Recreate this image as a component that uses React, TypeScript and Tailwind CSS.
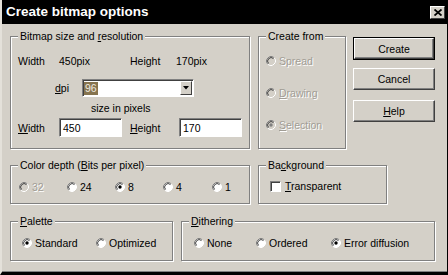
import React from "react";

const BG = "bg-[#d4d0c8]";

function Radio({ checked = false, disabled = false }: { checked?: boolean; disabled?: boolean }) {
  return (
    <svg width="10" height="10" viewBox="0 0 10 10" className="shrink-0">
      <circle cx="5" cy="5" r="4.3" fill={disabled ? "#d4d0c8" : "#ffffff"} />
      <path d="M8.18 1.82 A4.5 4.5 0 0 0 1.82 8.18" stroke="#808080" strokeWidth="1" fill="none" />
      <path d="M7.47 2.53 A3.5 3.5 0 0 0 2.53 7.47" stroke="#404040" strokeWidth="1" fill="none" />
      <path d="M1.82 8.18 A4.5 4.5 0 0 0 8.18 1.82" stroke="#ffffff" strokeWidth="1" fill="none" />
      {checked && <circle cx="5" cy="5" r="1.7" fill={disabled ? "#808080" : "#000"} />}
    </svg>
  );
}

function RadioItem({
  label,
  checked,
  disabled,
  className = "",
}: {
  label: React.ReactNode;
  checked?: boolean;
  disabled?: boolean;
  className?: string;
}) {
  return (
    <div className={`flex items-center gap-[3px] h-[12px] ${className}`}>
      <Radio checked={checked} disabled={disabled} />
      <span
        className={
          disabled ? "text-[#a19d95] [text-shadow:1px_1px_0_#ffffff] leading-[12px]" : "leading-[12px]"
        }
      >
        {label}
      </span>
    </div>
  );
}

function Group({
  label,
  className = "",
  children,
}: {
  label: React.ReactNode;
  className?: string;
  children?: React.ReactNode;
}) {
  return (
    <div
      className={`relative shrink-0 border border-[#808080] shadow-[inset_1px_1px_0_#ffffff,1px_1px_0_#ffffff] ${className}`}
    >
      <span className={`absolute left-[7px] -top-[7px] px-[2px] ${BG} leading-[12px] whitespace-nowrap`}>
        {label}
      </span>
      {children}
    </div>
  );
}

function Button({ children, def = false, className = "" }: { children: React.ReactNode; def?: boolean; className?: string }) {
  const inner = (
    <div className="w-full h-full flex items-center justify-center border-t border-l border-t-white border-l-white border-b border-r border-b-[#404040] border-r-[#404040] shadow-[inset_-1px_-1px_0_#808080] leading-[12px]">
      {children}
    </div>
  );
  if (def) {
    return <div className={`w-[82px] h-[23px] border border-black ${className}`}>{inner}</div>;
  }
  return <div className={`w-[82px] h-[22px] ${className}`}>{inner}</div>;
}

function Sunken({ className = "", children }: { className?: string; children?: React.ReactNode }) {
  return (
    <div
      className={`bg-white border-t border-l border-t-[#808080] border-l-[#808080] border-b border-r border-b-white border-r-white shadow-[inset_1px_1px_0_#404040] ${className}`}
    >
      {children}
    </div>
  );
}

const U = ({ children }: { children: React.ReactNode }) => <span className="underline underline-offset-[1px]">{children}</span>;

export default function App() {
  return (
    <div
      className={`w-[448px] h-[275px] ${BG} flex flex-col border-l-2 border-l-[#e4e1da] border-r border-r-black border-b-[3px] border-b-black text-black text-[10.5px] overflow-hidden`}
      style={{ fontFamily: '"Liberation Sans", Arial, sans-serif' }}
    >
      {/* Title bar */}
      <div className="h-[24px] bg-black flex items-center justify-between pl-[4px] pr-[2px] shrink-0">
        <span className="text-white font-bold text-[13.5px] leading-[16px]">Create bitmap options</span>
        <div className={`w-[15px] h-[13px] ${BG} border-t border-l border-t-white border-l-white border-b border-r border-b-[#404040] border-r-[#404040] flex items-center justify-center`}>
          <svg width="8" height="7" viewBox="0 0 8 7">
            <path d="M0.5 0.5 L7.5 6.5 M7.5 0.5 L0.5 6.5" stroke="#000" strokeWidth="1.8" />
          </svg>
        </div>
      </div>

      {/* Body */}
      <div className="flex-1 flex flex-col pl-[8px] pt-[12px] border-b border-b-[#808080]">
        {/* Row 1 */}
        <div className="flex items-start">
          <Group label={<>Bitmap size and <U>r</U>esolution</>} className="w-[240px] h-[113px]">
            <div className="pt-[18px] pl-[7px] flex flex-col">
              <div className="flex h-[12px] leading-[12px]">
                <span className="w-[41px]">Width</span>
                <span className="w-[71px]">450pix</span>
                <span className="w-[46px]">Height</span>
                <span>170pix</span>
              </div>
              <div className="mt-[12px] flex items-center h-[18px]">
                <span className="ml-[37px] w-[27px] leading-[12px]">
                  <U>d</U>pi
                </span>
                <Sunken className="w-[112px] h-[18px] flex items-center justify-between pl-[1px] pr-[1px]">
                  <span className="bg-[#86744f] text-[#f0ebe0] leading-[13px] px-[1px]">96</span>
                  <div className={`w-[12px] h-[14px] ${BG} border-t border-l border-t-white border-l-white border-b border-r border-b-[#404040] border-r-[#404040] flex items-center justify-center`}>
                    <svg width="6" height="4" viewBox="0 0 6 4">
                      <path d="M0 0 H6 L3 3.5 Z" fill="#000" />
                    </svg>
                  </div>
                </Sunken>
              </div>
              <div className="mt-[5px] h-[12px] leading-[12px] ml-[73px]">size in pixels</div>
              <div className="mt-[4px] flex items-center h-[19px]">
                <span className="w-[41px] leading-[12px]">
                  <U>W</U>idth
                </span>
                <Sunken className="w-[63px] h-[19px] flex items-center pl-[3px] leading-[12px]">450</Sunken>
                <span className="ml-[8px] w-[49px] leading-[12px]">
                  <U>H</U>eight
                </span>
                <Sunken className="w-[63px] h-[19px] flex items-center pl-[3px] leading-[12px]">170</Sunken>
              </div>
            </div>
          </Group>

          <Group label="Create from" className="ml-[8px] w-[88px] h-[113px]">
            <div className="pt-[18px] pl-[7px] flex flex-col gap-[20px]">
              <RadioItem label="Spread" disabled />
              <RadioItem label={<><U>D</U>rawing</>} disabled />
              <RadioItem label={<><U>S</U>election</>} disabled checked />
            </div>
          </Group>

          <div className="ml-[7px] mt-[1px] flex flex-col">
            <Button def>Create</Button>
            <Button className="mt-[8px]">Cancel</Button>
            <Button className="mt-[10px]">
              <span>
                <U>H</U>elp
              </span>
            </Button>
          </div>
        </div>

        {/* Row 2 */}
        <div className="flex items-start mt-[16px]">
          <Group label={<>Color depth (<U>B</U>its per pixel)</>} className="w-[240px] h-[39px]">
            <div className="pt-[15px] pl-[8px] flex">
              <RadioItem label="32" disabled className="w-[48px]" />
              <RadioItem label="24" className="w-[48px]" />
              <RadioItem label="8" checked className="w-[48px]" />
              <RadioItem label="4" className="w-[49px]" />
              <RadioItem label="1" />
            </div>
          </Group>
          <Group label={<>Ba<U>c</U>kground</>} className="ml-[8px] w-[129px] h-[39px]">
            <div className="pt-[14px] pl-[11px] flex items-center gap-[4px] h-[12px] box-content">
              <Sunken className="w-[11px] h-[11px] shrink-0" />
              <span className="leading-[12px]">
                <U>T</U>ransparent
              </span>
            </div>
          </Group>
        </div>

        {/* Row 3 */}
        <div className="flex items-start mt-[17px]">
          <Group label={<><U>P</U>alette</>} className="w-[163px] h-[40px]">
            <div className="pt-[15px] pl-[11px] flex">
              <RadioItem label="Standard" checked className="w-[74px]" />
              <RadioItem label="Optimized" />
            </div>
          </Group>
          <Group label={<><U>D</U>ithering</>} className="ml-[8px] w-[254px] h-[40px]">
            <div className="pt-[15px] pl-[12px] flex">
              <RadioItem label="None" className="w-[62px]" />
              <RadioItem label="Ordered" className="w-[75px]" />
              <RadioItem label="Error diffusion" checked />
            </div>
          </Group>
        </div>
      </div>
    </div>
  );
}
